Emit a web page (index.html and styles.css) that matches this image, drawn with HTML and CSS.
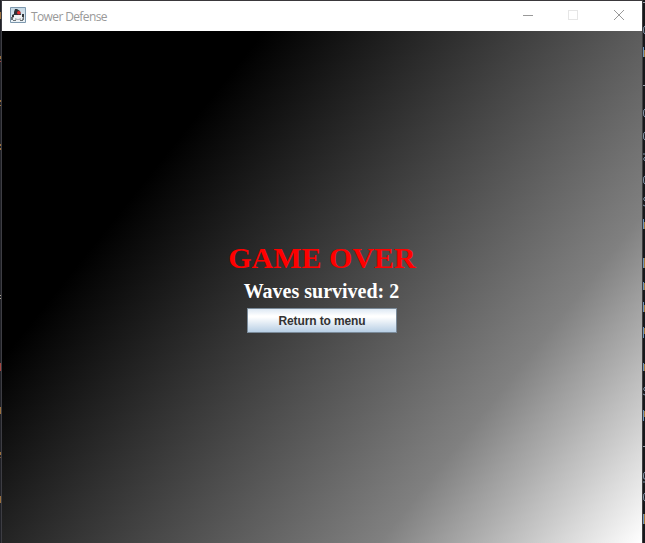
FILE: index.html
```
<!DOCTYPE html>
<html lang="en">
<head>
<meta charset="utf-8">
<title>Tower Defense</title>
<link rel="stylesheet" href="styles.css">
</head>
<body>
<div class="desktop">
  <svg class="edge-left" width="2" height="543" shape-rendering="crispEdges" aria-hidden="true">
    <path fill="#9b703d" d="M0 12h1v7H0zM0 56h1v3H0zM0 100h1v2H0zM0 105h1v1H0zM0 144h1v2H0zM0 148h1v2H0zM0 407h1v7H0zM0 452h1v3H0zM0 496h1v7H0z"/>
    <path fill="#a8a090" d="M0 295h1v1H0zM0 298h1v1H0z"/>
    <path fill="#a34642" d="M0 61h1v1H0zM0 363h1v8H0z"/>
    <path fill="#735238" d="M0 457h1v1H0z"/>
    <path fill="#3d3d43" d="M1 0h1v543H1z"/>
  </svg>
  <main class="window">
    <header class="titlebar">
      <svg class="app-icon" width="16" height="16" viewBox="0 0 16 16" aria-hidden="true">
        <defs><linearGradient id="sky" x2="0" y2="1"><stop stop-color="#c4d8e5"/><stop offset="1" stop-color="#eef4f8"/></linearGradient></defs>
        <path fill="url(#sky)" stroke="#7d98ae" d="M.5.5h15v15H.5z"/>
        <path fill="#303439" d="M5 2h2l3 2 1 4H4V5z"/>
        <path fill="#f2f3f4" d="M4 8h8v6H4z"/>
        <path fill="#34383c" d="M2 8l2-1v3l-2 1zM12 7h2v3h-2z"/>
        <path fill="#6c7276" d="M1 10h2v3H1zM13 10h1v3h-2zM3 13h3v1H3zM10 13h3v1h-3z"/>
        <path fill="#b4b9bc" d="M5 11l3 1 3-1v2H5z"/>
        <circle cx="8.8" cy="5.8" r="1.8" fill="#e52a2c"/>
      </svg>
      <h1 class="title">Tower Defense</h1>
      <div class="controls">
        <svg width="45" height="30" shape-rendering="crispEdges" aria-hidden="true"><path fill="#999" d="M16 14h10v1H16z"/></svg>
        <svg width="45" height="30" shape-rendering="crispEdges" aria-hidden="true"><path fill="none" stroke="#e6e6e6" d="M16.5 9.5h9v9h-9z"/></svg>
        <svg width="45" height="30" aria-hidden="true"><path fill="none" stroke="#999" d="M17 9l10 10M27 9L17 19"/></svg>
      </div>
    </header>
    <section class="game">
      <h2 class="headline">GAME OVER</h2>
      <p class="score">Waves survived: 2</p>
      <button class="menu-button" type="button">Return to menu</button>
    </section>
  </main>
  <svg class="edge-right" width="3" height="543" aria-hidden="true">
    <g shape-rendering="crispEdges">
      <path fill="#3d3d3f" d="M0 0h1v543H0z"/>
      <path fill="#9aa3ad" d="M1 2h2v1H1zM1 85h2v1H1zM1 446h2v1H1z"/>
      <path fill="#6f95bd" d="M1 47h1v10H1zM1 219h1v10H1zM1 258h1v10H1zM1 282h1v8H1zM1 302h1v10H1zM1 327h1v11H1zM1 363h1v8H1zM1 410h1v11H1zM1 514h1v10H1z"/>
      <path fill="#a07a3c" d="M2 50h1v7H2zM2 222h1v7H2zM2 258h1v10H2zM2 283h1v7H2zM2 305h1v7H2zM2 328h1v6H2zM2 364h1v7H2zM2 411h1v6H2zM2 514h1v10H2z"/>
    </g>
    <g fill="none" stroke="#8799ad">
      <path d="M3 26q-1.5 0-1.5 4t1.5 4M3 109q-1.5 0-1.5 4t1.5 4M3 132q-1.5 0-1.5 4t1.5 4M3 176q-1.5 0-1.5 4t1.5 4M3 472q-1.5 0-1.5 4t1.5 3M1 482h2M3 493q-1.5 0-1.5 4t1.5 4"/>
      <path d="M1 154h2M3 157q-3 2 0 4M3 197q-3 2 0 4M1 205l2 1M3 387q-3 2 0 4M1 394l2 1"/>
    </g>
  </svg>
</div>
</body>
</html>
```
FILE: styles.css
```
* { box-sizing: border-box; }
body { margin: 0; overflow: hidden; background: #1d1e22; }
.desktop {
  display: grid;
  grid-template-columns: 2px 640px 3px;
  width: 645px;
  height: 543px;
  background: #17181b;
}
.edge-left, .edge-right { display: block; }
.edge-left { background: #202127; }
.window {
  display: flex;
  flex-direction: column;
  border-top: 1px solid #3a383b;
}
.titlebar {
  display: flex;
  align-items: center;
  height: 30px;
  padding-left: 8px;
  background: #fff;
}
.app-icon { flex: none; margin-bottom: 2px; }
.title {
  margin: 1px 0 0 5px;
  color: #999;
  font: 400 12px/16px "Open Sans", "Noto Sans", sans-serif;
  letter-spacing: -0.62px;
}
.controls { display: flex; margin-left: auto; }
.controls svg { display: block; }
.game {
  display: flex;
  flex: 1;
  flex-direction: column;
  align-items: center;
  padding-top: 209px;
  background: linear-gradient(128.66deg, #000 25%, #808080 75%, #fff 100%);
}
.headline, .score {
  margin: 0;
  font-family: "Liberation Serif", serif;
  font-weight: 700;
  white-space: nowrap;
}
.headline { color: #f00; font-size: 30px; line-height: 35px; }
.score { margin: 4px 1px 0 0; color: #fff; font-size: 20px; line-height: 24px; }
.menu-button {
  width: 150px;
  height: 25px;
  margin-top: 5px;
  padding: 1px 0 0;
  border: 1px solid #7a8a99;
  background: linear-gradient(#dde8f3 0%, #fff 30%, #fff 35%, #b8cfe5 100%);
  color: #333;
  font: 700 12px/22px "Liberation Sans", sans-serif;
  letter-spacing: -0.12px;
}
```
